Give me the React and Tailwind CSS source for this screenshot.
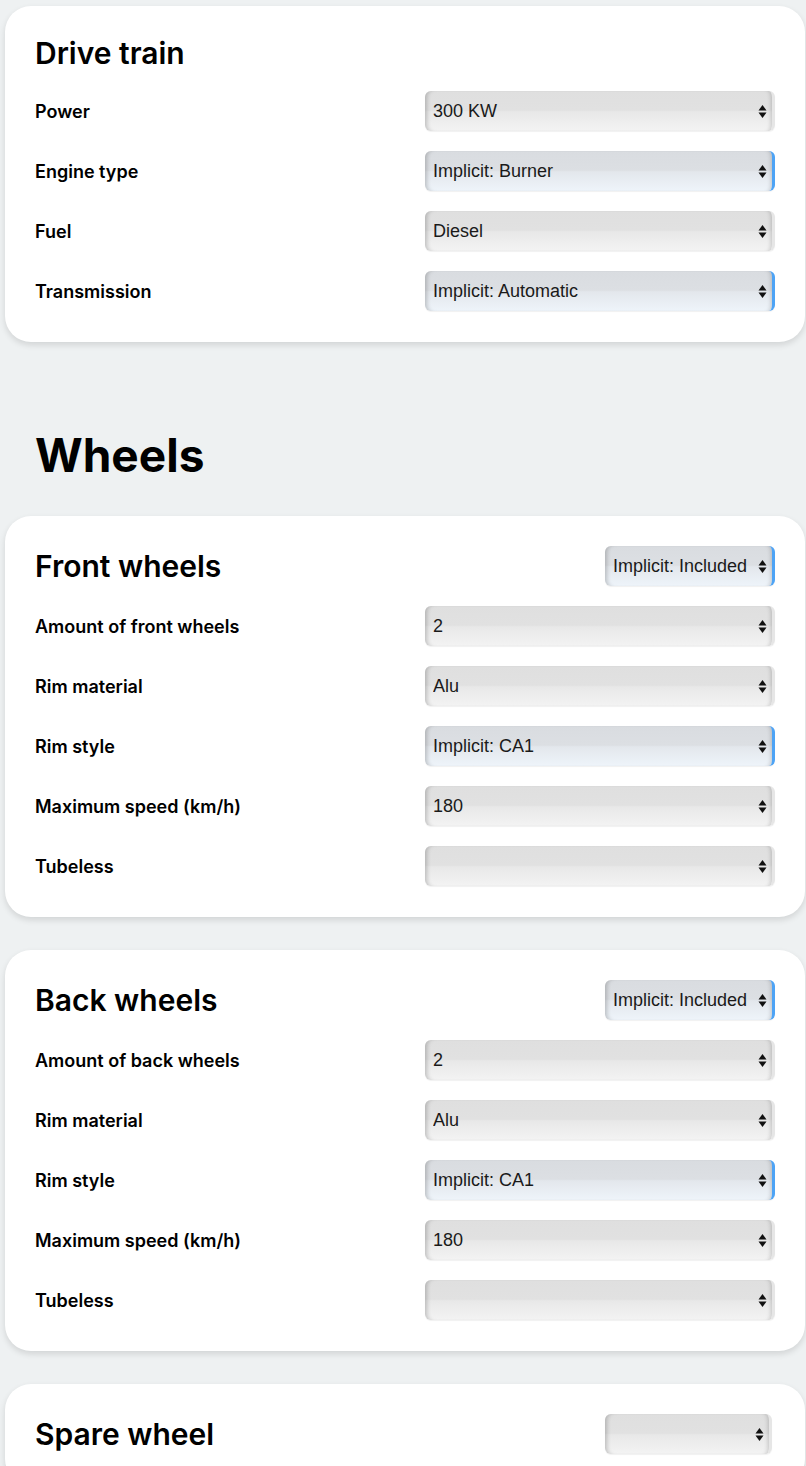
import React from 'react';

const sections = [
  {
    title: 'Front wheels',
    rows: [
      { label: 'Amount of front wheels', value: '2' },
      { label: 'Rim material', value: 'Alu' },
      { label: 'Rim style', value: 'Implicit: CA1', implicit: true },
      { label: 'Maximum speed (km/h)', value: '180' },
      { label: 'Tubeless', value: '' },
    ],
  },
  {
    title: 'Back wheels',
    rows: [
      { label: 'Amount of back wheels', value: '2' },
      { label: 'Rim material', value: 'Alu' },
      { label: 'Rim style', value: 'Implicit: CA1', implicit: true },
      { label: 'Maximum speed (km/h)', value: '180' },
      { label: 'Tubeless', value: '' },
    ],
  },
];

const driveTrain = [
  { label: 'Power', value: '300 KW' },
  { label: 'Engine type', value: 'Implicit: Burner', implicit: true },
  { label: 'Fuel', value: 'Diesel' },
  { label: 'Transmission', value: 'Implicit: Automatic', implicit: true },
];

function Arrows() {
  return (
    <svg width="9" height="15" viewBox="0 0 9 15" className="shrink-0">
      <path d="M4.5 1 L8.5 6.5 L0.5 6.5 Z" fill="#111" />
      <path d="M4.5 14 L8.5 8.5 L0.5 8.5 Z" fill="#111" />
    </svg>
  );
}

function Select({ value, implicit, className = '' }) {
  const skin = implicit
    ? 'bg-[linear-gradient(to_bottom,#d9dce0_0%,#dcdfe3_48%,#e3e7ec_52%,#eef4fa_100%)] border-r-[3px] border-[#4da3f5]'
    : 'bg-[linear-gradient(to_bottom,#dfdfdf_0%,#e1e1e1_48%,#e8e8e8_52%,#f3f3f3_100%)] border-r-[3px] border-[#e6e6e6]';
  return (
    <div
      className={`h-10 rounded-[6px] flex items-center gap-2 pl-2 pr-[5px] overflow-hidden shadow-[inset_5px_0_4px_-3px_rgba(0,0,0,0.2),inset_-4px_0_4px_-3px_rgba(0,0,0,0.18),0_1px_1px_rgba(0,0,0,0.06)] ${skin} ${className}`}
    >
      <span className="flex-1 min-w-0 overflow-hidden whitespace-nowrap text-[18px] text-[#1a1a1a] font-['Liberation_Sans',Arial,sans-serif]">
        {value}
      </span>
      <Arrows />
    </div>
  );
}

function Row({ label, value, implicit }) {
  return (
    <div className="flex items-center justify-between h-10">
      <span className="text-[18px] font-semibold text-black">{label}</span>
      <Select value={value} implicit={implicit} className="w-[350px]" />
    </div>
  );
}

function Card({ children }) {
  return (
    <div className="ml-[5px] mr-[1px] bg-white rounded-[26px] px-[30px] pt-[30px] pb-[31px] shadow-[0_3px_6px_rgba(0,0,0,0.12)] flex flex-col gap-5">
      {children}
    </div>
  );
}

export default function App() {
  return (
    <div className="min-h-screen bg-[#eef1f2] pt-[6px] font-['Inter',sans-serif] text-black">
      {/* Drive train */}
      <Card>
        <h2 className="text-[30px] leading-[35px] font-semibold">Drive train</h2>
        {driveTrain.map((r) => (
          <Row key={r.label} {...r} />
        ))}
      </Card>

      <h1 className="text-[46px] leading-[60px] font-bold pl-[35px] mt-[83px] mb-[31px]">Wheels</h1>

      <div className="flex flex-col gap-[33px]">
        {sections.map((s) => (
          <Card key={s.title}>
            <div className="flex items-center justify-between h-10">
              <h2 className="text-[30px] font-semibold">{s.title}</h2>
              <Select value="Implicit: Included" implicit className="w-[170px]" />
            </div>
            {s.rows.map((r) => (
              <Row key={r.label} {...r} />
            ))}
          </Card>
        ))}
        <Card>
          <div className="flex items-center justify-between h-10">
            <h2 className="text-[30px] font-semibold">Spare wheel</h2>
            <Select value="" className="w-[167px] mr-[3px]" />
          </div>
        </Card>
      </div>
    </div>
  );
}
